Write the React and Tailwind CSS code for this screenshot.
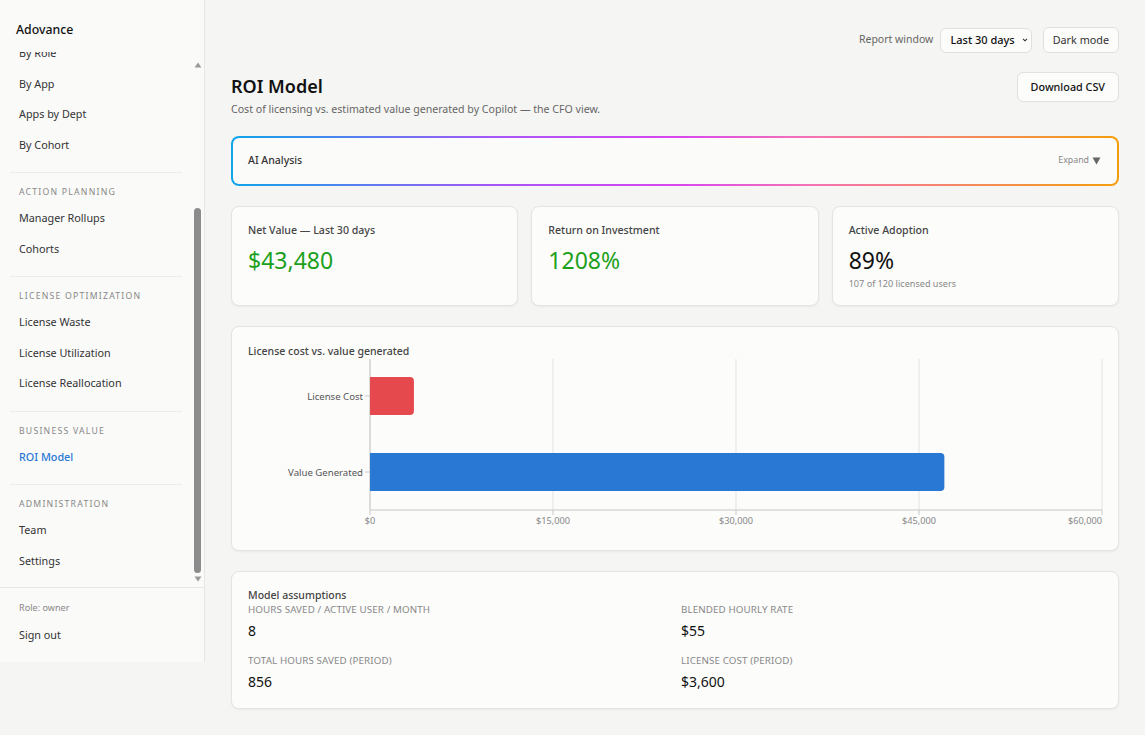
import React, { useLayoutEffect, useRef } from "react";

const FONT = { fontFamily: '"Noto Sans", "Open Sans", sans-serif' };

function NavItem({ children, active }) {
  return (
    <div
      className={
        "px-[9px] h-[30.5px] flex items-center text-[10.8px] " +
        (active ? "text-[#2a78d6] font-medium" : "text-[#333]")
      }
    >
      {children}
    </div>
  );
}

function NavHeader({ children }) {
  return (
    <div className="px-[9px] pt-[13px] pb-[5px] text-[8.7px] leading-[12px] tracking-[0.14em] uppercase text-[#888]">
      {children}
    </div>
  );
}

function Divider() {
  return <div className="mt-[12px] border-t border-[#ebebea]" />;
}

function ScrollTrack() {
  // thin overlay scrollbar drawn over the nav list
  return (
    <div className="pointer-events-none absolute top-0 bottom-0 right-[2px] w-[9px]">
      <svg className="absolute left-[0.5px] top-[10px]" width="8" height="6" viewBox="0 0 8 6">
        <path d="M4 0.5 L7.5 5.5 H0.5 Z" fill="#9a9a9a" />
      </svg>
      <div className="absolute left-[1px] w-[7px] top-[156px] h-[365px] rounded-full bg-[#8c8c8c]" />
      <svg className="absolute left-[0.5px] bottom-[5px]" width="8" height="6" viewBox="0 0 8 6">
        <path d="M0.5 0.5 H7.5 L4 5.5 Z" fill="#9a9a9a" />
      </svg>
    </div>
  );
}

function Sidebar() {
  const scroller = useRef(null);
  useLayoutEffect(() => {
    const el = scroller.current;
    if (el) el.scrollTop = el.scrollHeight;
  }, []);
  return (
    <aside className="w-[205px] h-[662px] shrink-0 bg-[#fafaf9] border-r border-[#e6e6e4] flex flex-col">
      <div className="h-[52px] pl-4 pt-[21px] text-[12.3px] font-medium text-[#111]">Adovance</div>
      <div className="relative flex-1 min-h-0">
        <div
          ref={scroller}
          className="h-full overflow-y-auto pl-[10px] pr-[22px] pb-[11px] [scrollbar-width:none]"
        >
          <NavHeader>Insights</NavHeader>
          <NavItem>Overview</NavItem>
          <NavItem>Trends</NavItem>
          <NavItem>By Department</NavItem>
          <NavItem>By Location</NavItem>
          <NavItem>By Role</NavItem>
          <NavItem>By App</NavItem>
          <NavItem>Apps by Dept</NavItem>
          <NavItem>By Cohort</NavItem>
          <Divider />
          <NavHeader>Action Planning</NavHeader>
          <NavItem>Manager Rollups</NavItem>
          <NavItem>Cohorts</NavItem>
          <Divider />
          <NavHeader>License Optimization</NavHeader>
          <NavItem>License Waste</NavItem>
          <NavItem>License Utilization</NavItem>
          <NavItem>License Reallocation</NavItem>
          <Divider />
          <NavHeader>Business Value</NavHeader>
          <NavItem active>ROI Model</NavItem>
          <Divider />
          <NavHeader>Administration</NavHeader>
          <NavItem>Team</NavItem>
          <NavItem>Settings</NavItem>
        </div>
        <ScrollTrack />
      </div>
      <div className="border-t border-[#e6e6e4] px-[19px] pt-[13px] pb-[19px]">
        <div className="text-[9.1px] leading-[14px] text-[#888]">Role: owner</div>
        <div className="mt-[12px] text-[10.8px] leading-[16px] text-[#333]">Sign out</div>
      </div>
    </aside>
  );
}

function Card({ className = "", children }) {
  return (
    <div className={"bg-[#fcfcfb] border border-[#e4e4e2] rounded-lg shadow-[0_1px_2px_rgba(0,0,0,0.05)] " + className}>
      {children}
    </div>
  );
}

function Kpi({ label, value, sub, green }) {
  return (
    <Card className="h-[100px] px-[16px] pt-[15px]">
      <div className="text-[10.6px] leading-[16px] font-medium text-[#444]">{label}</div>
      <div className={"mt-[7px] text-[23px] leading-[30px] " + (green ? "text-[#1ca01c]" : "text-[#111]")}>{value}</div>
      {sub && <div className="mt-[2px] text-[9.1px] text-[#888]">{sub}</div>}
    </Card>
  );
}

function BarChart() {
  // horizontal bars on a $0–$60,000 axis
  const x0 = 122;
  const w = 732;
  const top = 0;
  const axisY = 151;
  const max = 60000;
  const ticks = [0, 15000, 30000, 45000, 60000];
  const bars = [
    { label: "License Cost", value: 3600, color: "#e5484d", y: 18 },
    { label: "Value Generated", value: 47080, color: "#2878d4", y: 94 },
  ];
  return (
    <svg width="854" height="176" className="block overflow-visible" style={FONT}>
      {ticks.map((t, i) => {
        const x = x0 + (t / max) * w;
        const anchor = i === ticks.length - 1 ? "end" : "middle";
        return (
          <g key={t}>
            <line x1={x} y1={top} x2={x} y2={axisY} stroke="#e3e3e1" strokeWidth="1" />
            <line x1={x} y1={axisY} x2={x} y2={axisY + 5} stroke="#c8c8c6" strokeWidth="1" />
            <text x={x} y={axisY + 14} textAnchor={anchor} fontSize="9.2" fill="#888">
              {"$" + t.toLocaleString("en-US")}
            </text>
          </g>
        );
      })}
      <line x1={x0} y1={axisY} x2={x0 + w} y2={axisY} stroke="#c8c8c6" strokeWidth="1" />
      <line x1={x0} y1={top} x2={x0} y2={axisY} stroke="#c8c8c6" strokeWidth="1" />
      {bars.map((b) => {
        const bw = (b.value / max) * w;
        return (
          <g key={b.label}>
            <line x1={x0 - 5} y1={b.y + 19} x2={x0} y2={b.y + 19} stroke="#c8c8c6" />
            <text x={x0 - 7} y={b.y + 22.5} textAnchor="end" fontSize="9.6" fill="#555">
              {b.label}
            </text>
            <path
              d={`M${x0} ${b.y} H${x0 + bw - 4} Q${x0 + bw} ${b.y} ${x0 + bw} ${b.y + 4} V${b.y + 34} Q${x0 + bw} ${b.y + 38} ${x0 + bw - 4} ${b.y + 38} H${x0} Z`}
              fill={b.color}
            />
          </g>
        );
      })}
    </svg>
  );
}

function Assumption({ label, value }) {
  return (
    <div>
      <div className="text-[9.8px] leading-[13px] uppercase text-[#888] tracking-[0.01em]">{label}</div>
      <div className="mt-[5px] text-[14px] leading-[20px] text-[#111]">{value}</div>
    </div>
  );
}

export default function App() {
  return (
    <div className="min-h-[735px] w-full bg-[#f5f5f3] flex items-start" style={FONT}>
      <Sidebar />
      <main className="flex-1 min-w-0 px-[26px] pt-[27px] pb-[26px]">
        <div className="flex justify-end items-center gap-[7px]">
          <span className="text-[10.5px] text-[#666]">Report window</span>
          <div className="h-[25px] pl-[9px] pr-[2px] flex items-center gap-[6px] border border-[#e0e0de] rounded-md bg-[#fcfcfb] text-[11px] font-medium text-[#111]">
            Last 30 days
            <svg width="8" height="8" viewBox="0 0 10 10" fill="none" stroke="#333" strokeWidth="1.3">
              <path d="M2.5 3.5 L5 6 L7.5 3.5" />
            </svg>
          </div>
          <div className="ml-[4px] h-[26px] px-[9px] flex items-center border border-[#e0e0de] rounded-md bg-[#fcfcfb] text-[10.8px] text-[#333]">
            Dark mode
          </div>
        </div>

        <div className="mt-[19px] flex justify-between items-start">
          <div>
            <h1 className="text-[18px] leading-[28px] font-semibold text-[#111]">ROI Model</h1>
            <p className="mt-[1px] text-[10.6px] leading-[16px] text-[#666]">
              Cost of licensing vs. estimated value generated by Copilot — the CFO view.
            </p>
          </div>
          <div className="h-[30px] px-[13px] flex items-center border border-[#e0e0de] rounded-md bg-[#fcfcfb] text-[10.8px] font-medium text-[#111]">
            Download CSV
          </div>
        </div>

        <div className="mt-[19px] rounded-lg p-[2px] bg-[linear-gradient(90deg,#0ea5e9_0%,#a855f7_30%,#d946ef_50%,#f472b6_65%,#f59e0b_100%)]">
          <div className="h-[46px] rounded-[6px] bg-[#fbfbfa] flex items-center justify-between pl-[15px] pr-[16px]">
            <span className="text-[10.5px] font-medium text-[#333]">AI Analysis</span>
            <span className="text-[8.8px] text-[#888] flex items-center gap-[3px]">
              Expand
              <svg width="9" height="8" viewBox="0 0 9 8">
                <path d="M0.5 0.5 H8.5 L4.5 7.5 Z" fill="#666" />
              </svg>
            </span>
          </div>
        </div>

        <div className="mt-[20px] grid grid-cols-3 gap-[13px]">
          <Kpi label="Net Value — Last 30 days" value="$43,480" green />
          <Kpi label="Return on Investment" value="1208%" green />
          <Kpi label="Active Adoption" value="89%" sub="107 of 120 licensed users" />
        </div>

        <Card className="mt-[20px] h-[225px] px-[16px] pt-[16px]">
          <div className="text-[10.5px] leading-[16px] font-medium text-[#444]">License cost vs. value generated</div>
          <BarChart />
        </Card>

        <Card className="mt-[20px] h-[138px] px-[16px] pt-[16px]">
          <div className="text-[10.5px] leading-[15px] font-medium text-[#444]">Model assumptions</div>
          <div className="grid grid-cols-2 gap-x-[12px] gap-y-[13px]">
            <Assumption label="Hours saved / active user / month" value="8" />
            <Assumption label="Blended hourly rate" value="$55" />
            <Assumption label="Total hours saved (period)" value="856" />
            <Assumption label="License cost (period)" value="$3,600" />
          </div>
        </Card>
      </main>
    </div>
  );
}
